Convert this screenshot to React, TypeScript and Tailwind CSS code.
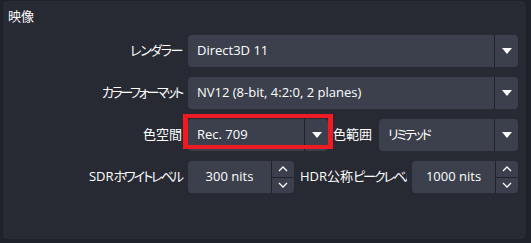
import React from "react";

const font = "[font-family:'Open_Sans','Noto_Sans_CJK_JP',sans-serif]";

function Arrow() {
    return (
        <svg width="10" height="6" viewBox="0 0 10 6">
            <polygon points="0,0 10,0 5,6" fill="#ffffff"/>
        </svg>
    );
}

function Combo({text, className = "", textClass = ""}: {text: React.ReactNode; className?: string; textClass?: string}) {
    return (
        <div className={`relative flex h-[32px] items-center rounded-[4px] bg-[#3c3f4c] ${className}`}>
            <div className={`flex-1 truncate pl-[9px] text-[13px] text-white ${textClass}`}>{text}</div>
            <div className="flex h-full w-[24px] items-center justify-center border-l border-[#20222a]">
                <Arrow/>
            </div>
        </div>
    );
}

function Spin({text, className = ""}: {text: string; className?: string}) {
    return (
        <div className={`flex h-[32px] items-center rounded-[4px] bg-[#3c3f4c] ${className}`}>
            <div className="flex-1 text-center text-[13px] text-white">{text}</div>
            <div className="flex h-full w-[23px] flex-col border-l border-[#20222a]">
                <div className="flex flex-1 items-center justify-center border-b border-[#20222a]">
                    <svg width="10" height="6" viewBox="0 0 10 6">
                        <polyline points="1,5 5,1 9,5" fill="none" stroke="#ffffff" strokeWidth="1.3"/>
                    </svg>
                </div>
                <div className="flex flex-1 items-center justify-center">
                    <svg width="10" height="6" viewBox="0 0 10 6">
                        <polyline points="1,1 5,5 9,1" fill="none" stroke="#ffffff" strokeWidth="1.3"/>
                    </svg>
                </div>
            </div>
        </div>
    );
}

function Label({children, className = ""}: {children: React.ReactNode; className?: string}) {
    return (
        <div className={`flex h-[32px] items-center justify-end whitespace-nowrap text-[13px] text-white [font-feature-settings:'palt'] ${className}`}>
            {children}
        </div>
    );
}

export default function App() {
    return (
        <div className={`h-[243px] w-[531px] bg-[#1f2128] pl-[3px] pt-[1px] ${font}`}>
            <div className="h-[238px] w-[523px] rounded-[4px] bg-[#272a33]">
                <div className="pl-[5px] pt-[5px] text-[13px] leading-[20px] text-white">映像</div>
                <div className="mt-[9px] grid grid-cols-[179px_330px] gap-x-[6px] gap-y-[10px]">
                    <Label><span className="tracking-[-1.4px]">レンダラー</span></Label>
                    <Combo text="Direct3D 11"/>

                    <Label><span className="tracking-[-2.3px]">カラーフォーマット</span></Label>
                    <Combo text="NV12 (8-bit, 4:2:0, 2 planes)"/>

                    <Label>色空間</Label>
                    <div className="flex items-center">
                        <div className="relative w-[140px]">
                            <Combo text="Rec. 709"/>
                            <div className="absolute left-[-5px] top-[-5px] h-[35px] w-[150px] border-x-[5px] border-y-[4px] border-[#ed1c24]"/>
                        </div>
                        <Label className="ml-[5px] w-[39px] justify-start">色範囲</Label>
                        <Combo
                            text="リミテッド"
                            textClass="tracking-[-2.5px] [font-feature-settings:'palt']"
                            className="ml-[7px] w-[139px]"
                        />
                    </div>

                    <Label>SDR<span className="tracking-[-2px]">ホワイトレベル</span></Label>
                    <div className="flex items-center">
                        <Spin text="300 nits" className="w-[106px]"/>
                        <div className="ml-[6px] w-[107px] overflow-hidden">
                            <Label className="justify-start">HDR公称<span className="tracking-[-2px]">ピークレベル</span></Label>
                        </div>
                        <Spin text="1000 nits" className="ml-[5px] w-[106px]"/>
                    </div>
                </div>
            </div>
        </div>
    );
}
